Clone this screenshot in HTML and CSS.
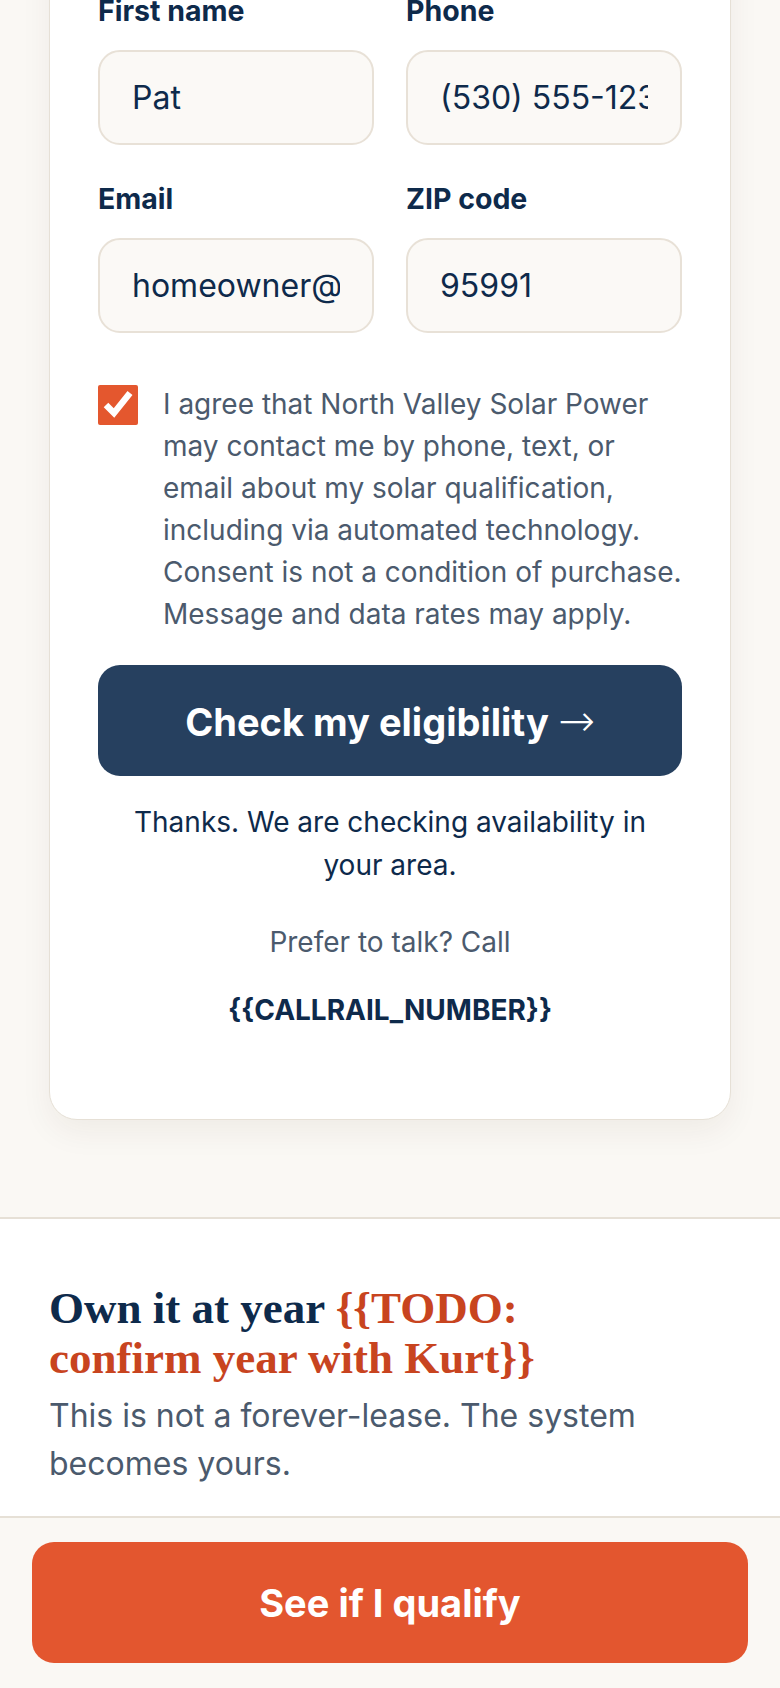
FILE: index.html
```html
<!DOCTYPE html>
<html lang="en">
<head>
  <meta charset="UTF-8">
  <title>North Valley Solar Power – Check eligibility</title>
  <link rel="stylesheet" href="styles.css">
</head>
<body>
  <main class="hero">
    <div class="card">
      <form class="lead-form" onsubmit="return false;">
        <div class="field-grid">
          <div class="field">
            <label for="firstName">First name</label>
            <input id="firstName" type="text" value="Pat">
          </div>
          <div class="field">
            <label for="phone">Phone</label>
            <input id="phone" type="tel" value="(530) 555-1234">
          </div>
          <div class="field">
            <label for="email">Email</label>
            <input id="email" type="email" value="homeowner@example.com">
          </div>
          <div class="field">
            <label for="zip">ZIP code</label>
            <input id="zip" type="text" value="95991">
          </div>
        </div>

        <label class="consent">
          <input type="checkbox" checked>
          <span>I agree that North Valley Solar Power may contact me by phone, text, or email about my solar qualification, including via automated technology. Consent is not a condition of purchase. Message and data rates may apply.</span>
        </label>

        <button class="btn-primary" type="submit">Check my eligibility <span class="arrow">→</span></button>

        <p class="form-status">Thanks. We are checking availability in your area.</p>
        <p class="call-line">Prefer to talk? Call</p>
        <a class="call-number" href="#">{{CALLRAIL_NUMBER}}</a>
      </form>
    </div>
  </main>

  <section class="ownership">
    <h2>Own it at year <span class="todo">{{TODO: confirm year with Kurt}}</span></h2>
    <p>This is not a forever-lease. The system becomes yours.</p>
  </section>

  <div class="cta-bar">
    <a class="btn-cta" href="#">See if I qualify</a>
  </div>
</body>
</html>
```

FILE: styles.css
```css
body {
  margin: 0;
  background: #faf8f4;
  font-family: Inter, "Noto Sans", sans-serif;
  color: #0e2a4b;
}
.hero {
  padding: 0 49px 97px;
}
.card {
  margin-top: -56px;
  background: white;
  border: 1.5px solid #e6e0d6;
  border-radius: 28px;
  padding: 48px 48px 88px;
  box-shadow: 0 12px 32px rgba(60, 40, 10, 0.06);
}
.field-grid {
  display: grid;
  grid-template-columns: 1fr 1fr;
  column-gap: 32px;
  row-gap: 36px;
}
.field label {
  display: block;
  font-size: 28.5px;
  font-weight: 700;
  line-height: 36px;
  margin-bottom: 21px;
}
.field input {
  display: block;
  width: 100%;
  box-sizing: border-box;
  height: 95px;
  padding: 0 32px;
  font-family: inherit;
  font-size: 32px;
  color: #0e2a4b;
  background: #fbf9f6;
  border: 2px solid #e8e1d7;
  border-radius: 22px;
  outline: none;
}
.consent {
  display: flex;
  gap: 25px;
  margin-top: 50px;
  font-size: 28px;
  line-height: 42px;
  color: #4b5a6d;
}
.consent input {
  flex: none;
  width: 40px;
  height: 40px;
  margin: 2px 0 0;
  accent-color: #e4572e;
}
.btn-primary {
  display: block;
  width: 100%;
  height: 111px;
  margin-top: 30px;
  background: #26405f;
  color: white;
  border: 0;
  border-radius: 22px;
  font-family: inherit;
  font-size: 38px;
  font-weight: 700;
}
.arrow {
  font-family: "DejaVu Sans", sans-serif;
  font-weight: 200;
  font-size: 44px;
}
.form-status {
  max-width: 540px;
  margin: 25px auto 0;
  text-align: center;
  font-size: 28px;
  line-height: 43px;
}
.call-line {
  margin: 34px 0 0;
  text-align: center;
  font-size: 28px;
  line-height: 42px;
  color: #4b5a6d;
}
.call-number {
  display: block;
  margin-top: 26px;
  text-align: center;
  font-size: 28px;
  font-weight: 700;
  line-height: 42px;
  color: #0e2a4b;
  text-decoration: none;
}
.ownership {
  background: white;
  border-top: 2px solid #e6e0d6;
  padding: 64px 49px 28px;
}
.ownership h2 {
  max-width: 560px;
  margin: 0;
  font-family: "Liberation Serif", serif;
  font-size: 45px;
  font-weight: 700;
  line-height: 50px;
  color: #0e2a4b;
}
.todo {
  color: #c8441f;
}
.ownership p {
  margin: 9px 0 0;
  font-size: 32px;
  line-height: 48px;
  color: #4b5a6d;
}
.cta-bar {
  position: sticky;
  bottom: 0;
  background: #faf8f4;
  border-top: 2px solid #e6e0d6;
  padding: 24px 32px 25px;
}
.btn-cta {
  display: flex;
  align-items: center;
  justify-content: center;
  height: 121px;
  background: #e3562f;
  color: white;
  border-radius: 22px;
  font-size: 38px;
  font-weight: 700;
  text-decoration: none;
}
```
